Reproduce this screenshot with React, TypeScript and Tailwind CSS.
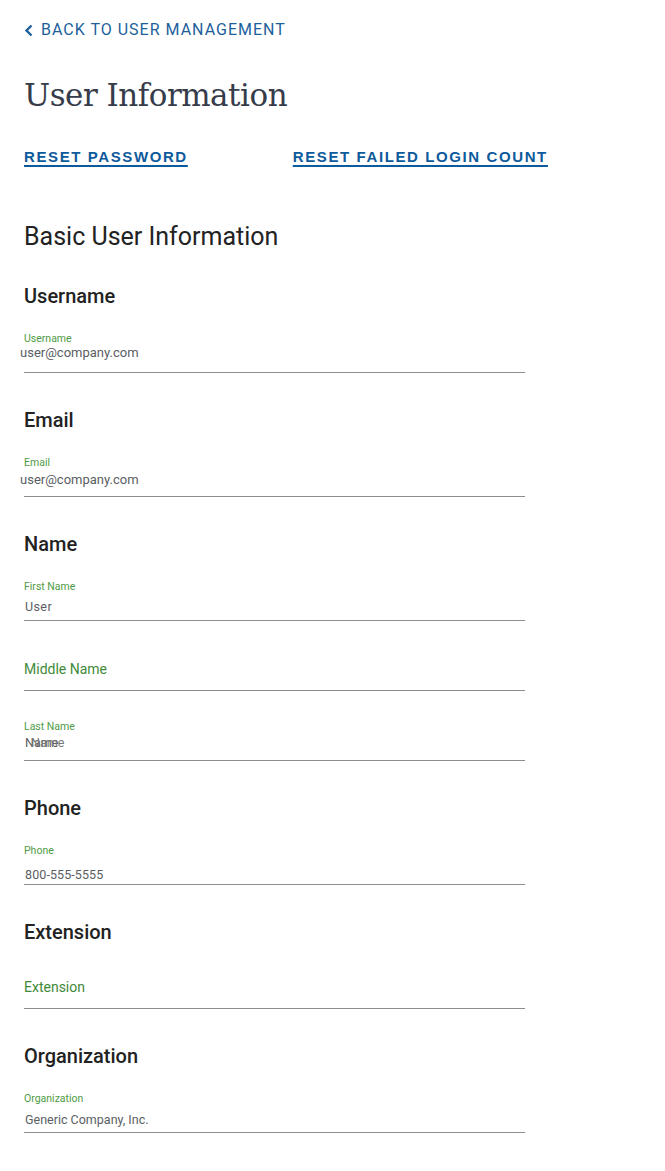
import React from 'react';

type Field = {
  label: string;
  value?: string;
  valueClass?: string;
  ghost?: boolean;
};

type Section = {
  title: string;
  fields: Field[];
};

const SECTIONS: Section[] = [
  { title: 'Username', fields: [{ label: 'Username', value: 'user@company.com', valueClass: 'mt-[-1px] ml-[-4px] text-[13px]' }] },
  { title: 'Email', fields: [{ label: 'Email', value: 'user@company.com', valueClass: 'mt-[2px] ml-[-4px] text-[13px]' }] },
  {
    title: 'Name',
    fields: [
      { label: 'First Name', value: 'User', valueClass: 'mt-[5px] ml-[1px] text-[12.5px] tracking-[0.4px]' },
      { label: 'Middle Name' },
      { label: 'Last Name', value: 'Name', ghost: true, valueClass: 'mt-[1px] ml-[1px] text-[12.5px]' },
    ],
  },
  { title: 'Phone', fields: [{ label: 'Phone', value: '800-555-5555', valueClass: 'mt-[9px] ml-[1px] text-[12.5px] tracking-[0.1px]' }] },
  { title: 'Extension', fields: [{ label: 'Extension' }] },
  { title: 'Organization', fields: [{ label: 'Organization', value: 'Generic Company, Inc.', valueClass: 'mt-[6px] ml-[1px] text-[12.5px]' }] },
];

const roboto = { fontFamily: 'Roboto, "Liberation Sans", sans-serif' };

function TextField({ field }: { field: Field }) {
  if (!field.value) {
    // empty field: the label sits in the input as placeholder
    return (
      <div className="h-[51px] w-[501px] border-b border-[#8c8c8c] flex flex-col justify-end pb-[12px]">
        <span className="text-[14px] leading-[18px] text-[#3f8a38]">{field.label}</span>
      </div>
    );
  }
  return (
    <div className="h-[51px] w-[501px] border-b border-[#8c8c8c] flex flex-col pt-[10px]">
      <span className="text-[10.5px] leading-[14px] text-[#4f9b46]">{field.label}</span>
      <div className={`relative leading-[16px] text-[#5a5e63] ${field.valueClass}`}>
        <span>{field.value}</span>
        {field.ghost && <span className="absolute left-[6px] top-0 text-[#777]">{field.value}</span>}
      </div>
    </div>
  );
}

export default function App() {
  return (
    <div className="min-h-screen bg-white px-[24px] pt-[19px] pb-[40px]" style={roboto}>
      <a className="flex items-center h-[20px] mt-[1px] text-[#1d5f9b] text-[16px] tracking-[1px] uppercase">
        <svg width="10" height="13" viewBox="0 0 10 13" className="ml-[0px] mr-[7px]">
          <path d="M7.5 1.5 L2.5 6.5 L7.5 11.5" fill="none" stroke="#1d5f9b" strokeWidth="2.4" />
        </svg>
        Back to User Management
      </a>

      <h1
        className="mt-[35px] h-[40px] leading-[40px] text-[31px] text-[#363c4a]"
        style={{ fontFamily: '"DejaVu Serif", "Liberation Serif", serif', letterSpacing: '-0.5px' }}
      >
        User Information
      </h1>

      <div
        className="mt-[32px] flex gap-[105px] h-[20px] leading-[20px] text-[15px] font-bold tracking-[1.6px] text-[#0d5a9c]"
        style={{ fontFamily: '"Liberation Sans", Arial, sans-serif' }}
      >
        <a className="underline decoration-2 underline-offset-[3px]">RESET PASSWORD</a>
        <a className="underline decoration-2 underline-offset-[3px]">RESET FAILED LOGIN COUNT</a>
      </div>

      <h2 className="mt-[54px] text-[25px] leading-[32px] text-[#222]">Basic User Information</h2>

      <div className="mt-[31px] flex flex-col gap-[35px]">
        {SECTIONS.map(section => (
          <div key={section.title} className="flex flex-col">
            <h3 className="text-[20px] leading-[24px] font-medium text-[#222]">{section.title}</h3>
            <div className="mt-[14px] flex flex-col gap-[19px]">
              {section.fields.map(f => (
                <TextField key={f.label} field={f} />
              ))}
            </div>
          </div>
        ))}
      </div>
    </div>
  );
}
